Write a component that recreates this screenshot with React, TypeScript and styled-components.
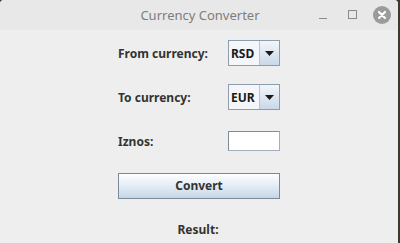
import React from 'react';
import styled, { createGlobalStyle } from 'styled-components';

const GlobalStyle = createGlobalStyle`
  html, body {
    margin: 0;
    padding: 0;
    background: #3d3a2c;
  }
  #root {
    width: 400px;
    height: 243px;
  }
`;

const App = () => {
  return (
    <>
      <GlobalStyle />
      <Window>
        <TitleBar>
          <Title>Currency Converter</Title>
          <Controls>
            <MinButton />
            <MaxButton />
            <CloseButton>
              <svg width="10" height="10" viewBox="0 0 10 10">
                <path d="M2 2 L8 8 M8 2 L2 8" stroke="#fff" strokeWidth="2.2" strokeLinecap="round" />
              </svg>
            </CloseButton>
          </Controls>
        </TitleBar>
        <Body>
          <Form>
            <Label>From currency:</Label>
            <Cell>
              <Combo>
                <ComboValue>RSD</ComboValue>
                <ComboArrow>
                  <svg width="9" height="5" viewBox="0 0 9 5">
                    <path d="M0 0 H9 L4.5 5 Z" fill="#1a1a1a" />
                  </svg>
                </ComboArrow>
              </Combo>
            </Cell>

            <Label>To currency:</Label>
            <Cell>
              <Combo>
                <ComboValue>EUR</ComboValue>
                <ComboArrow>
                  <svg width="9" height="5" viewBox="0 0 9 5">
                    <path d="M0 0 H9 L4.5 5 Z" fill="#1a1a1a" />
                  </svg>
                </ComboArrow>
              </Combo>
            </Cell>

            <Label>Iznos:</Label>
            <Cell>
              <TextField />
            </Cell>

            <Wide>
              <ConvertButton>Convert</ConvertButton>
            </Wide>

            <Wide>
              <ResultLabel>Result:</ResultLabel>
            </Wide>
          </Form>
        </Body>
      </Window>
    </>
  );
};

export default App;

const Window = styled.div`
  width: 398px;
  height: 243px;
  display: flex;
  flex-direction: column;
  background: #eeeeee;
  border-radius: 4px 4px 0 0;
  overflow: hidden;
`;

const TitleBar = styled.div`
  height: 30px;
  flex-shrink: 0;
  background: #e8e8e8;
  display: flex;
  align-items: center;
  justify-content: center;
  position: relative;
`;

const Title = styled.span`
  font-family: 'Noto Sans', sans-serif;
  font-size: 13px;
  color: #7d7d7d;
  margin-left: 2px;
`;

const Controls = styled.div`
  position: absolute;
  right: 7px;
  top: 0;
  height: 30px;
  display: flex;
  align-items: center;
`;

const MinButton = styled.div`
  width: 8px;
  height: 1px;
  background: #8a8a8a;
  margin-top: 7px;
  margin-right: 21px;
`;

const MaxButton = styled.div`
  width: 7px;
  height: 7px;
  border: 1px solid #8a8a8a;
  margin-top: -2px;
  margin-right: 16px;
`;

const CloseButton = styled.div`
  width: 18px;
  height: 18px;
  border-radius: 50%;
  background: #9b9b9b;
  display: flex;
  align-items: center;
  justify-content: center;
  margin-top: -1px;
`;

const Body = styled.div`
  flex: 1;
  padding-top: 1px;
`;

const Form = styled.div`
  display: grid;
  grid-template-columns: 110px 52px;
  grid-auto-rows: 44px;
  margin-left: 118px;
  font-family: 'Noto Sans', sans-serif;
  font-size: 12px;
  font-weight: bold;
  color: #333333;
`;

const Label = styled.div`
  display: flex;
  align-items: center;
`;

const Cell = styled.div`
  display: flex;
  align-items: center;
`;

const Wide = styled.div`
  grid-column: 1 / 3;
  display: flex;
  align-items: center;
  justify-content: center;
`;

const Combo = styled.div`
  width: 53px;
  height: 26px;
  box-sizing: border-box;
  border: 1px solid #8d9cae;
  display: flex;
  background: #f4f6f9;
`;

const ComboValue = styled.div`
  flex: 1;
  display: flex;
  align-items: center;
  padding-left: 2px;
  color: #1a1a1a;
  font-size: 12px;
  border-right: 1px solid #b7c4d3;
`;

const ComboArrow = styled.div`
  width: 19px;
  display: flex;
  align-items: center;
  justify-content: center;
  background: linear-gradient(#f2f6fa, #c9d8e8);
`;

const TextField = styled.div`
  width: 52px;
  height: 20px;
  box-sizing: border-box;
  background: #ffffff;
  border: 1px solid #a3afbc;
  border-top-color: #7f8c9a;
  border-left-color: #7f8c9a;
`;

const ConvertButton = styled.button`
  width: 162px;
  height: 26px;
  box-sizing: border-box;
  border: 1px solid #7a8a99;
  border-radius: 0;
  background: linear-gradient(#fdfeff 0%, #e6eef7 45%, #c6d6e8 100%);
  font-family: 'Noto Sans', sans-serif;
  font-size: 12px;
  font-weight: bold;
  color: #333333;
  padding: 0;
  margin-top: 1px;
`;

const ResultLabel = styled.span`
  margin-left: -2px;
`;
